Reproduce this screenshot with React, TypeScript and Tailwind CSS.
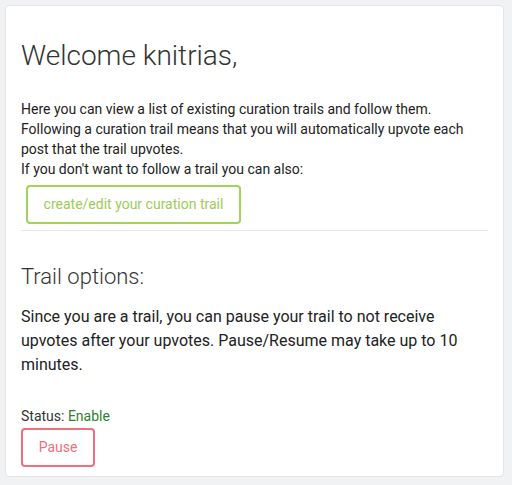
export default function App() {
  return (
    <div className="min-h-[485px] bg-[#f1f2f4] p-[5px] font-['Roboto',sans-serif] text-[#212529]">
      <div className="w-[499px] h-[472px] rounded-[4px] border border-[#e3e5e8] bg-white px-[15px] pt-[33px]">
        <h1 className="text-[28px] font-light leading-[34px] text-[#333]">Welcome knitrias,</h1>
        <div className="mt-[26px] text-[14px] leading-[20px] text-[#222]">
          <p>Here you can view a list of existing curation trails and follow them.</p>
          <p>Following a curation trail means that you will automatically upvote each post that the trail upvotes.</p>
          <p>If you don&apos;t want to follow a trail you can also:</p>
        </div>
        <button className="ml-[5px] mt-[6px] h-[39px] w-[215px] rounded-[4px] border-2 border-[#a3d45a] text-[14px] text-[#9ccc55]">
          create/edit your curation trail
        </button>
        <div className="mt-[6px] border-t border-[#e8e8e8]" />
        <h2 className="mt-[32px] text-[22px] font-light leading-[28px] text-[#333]">Trail options:</h2>
        <p className="mt-[14px] pr-[20px] text-[16px] leading-[24px] text-[#222]">
          Since you are a trail, you can pause your trail to not receive upvotes after your upvotes. Pause/Resume may take up to 10 minutes.
        </p>
        <p className="mt-[29px] text-[14px] leading-[20px] text-[#333]">
          Status: <span className="text-[#2e7d32]">Enable</span>
        </p>
        <button className="mt-[2px] h-[39px] w-[74px] rounded-[4px] border-2 border-[#ef6f7d] text-[14px] text-[#ef6f7d]">
          Pause
        </button>
      </div>
    </div>
  );
}
